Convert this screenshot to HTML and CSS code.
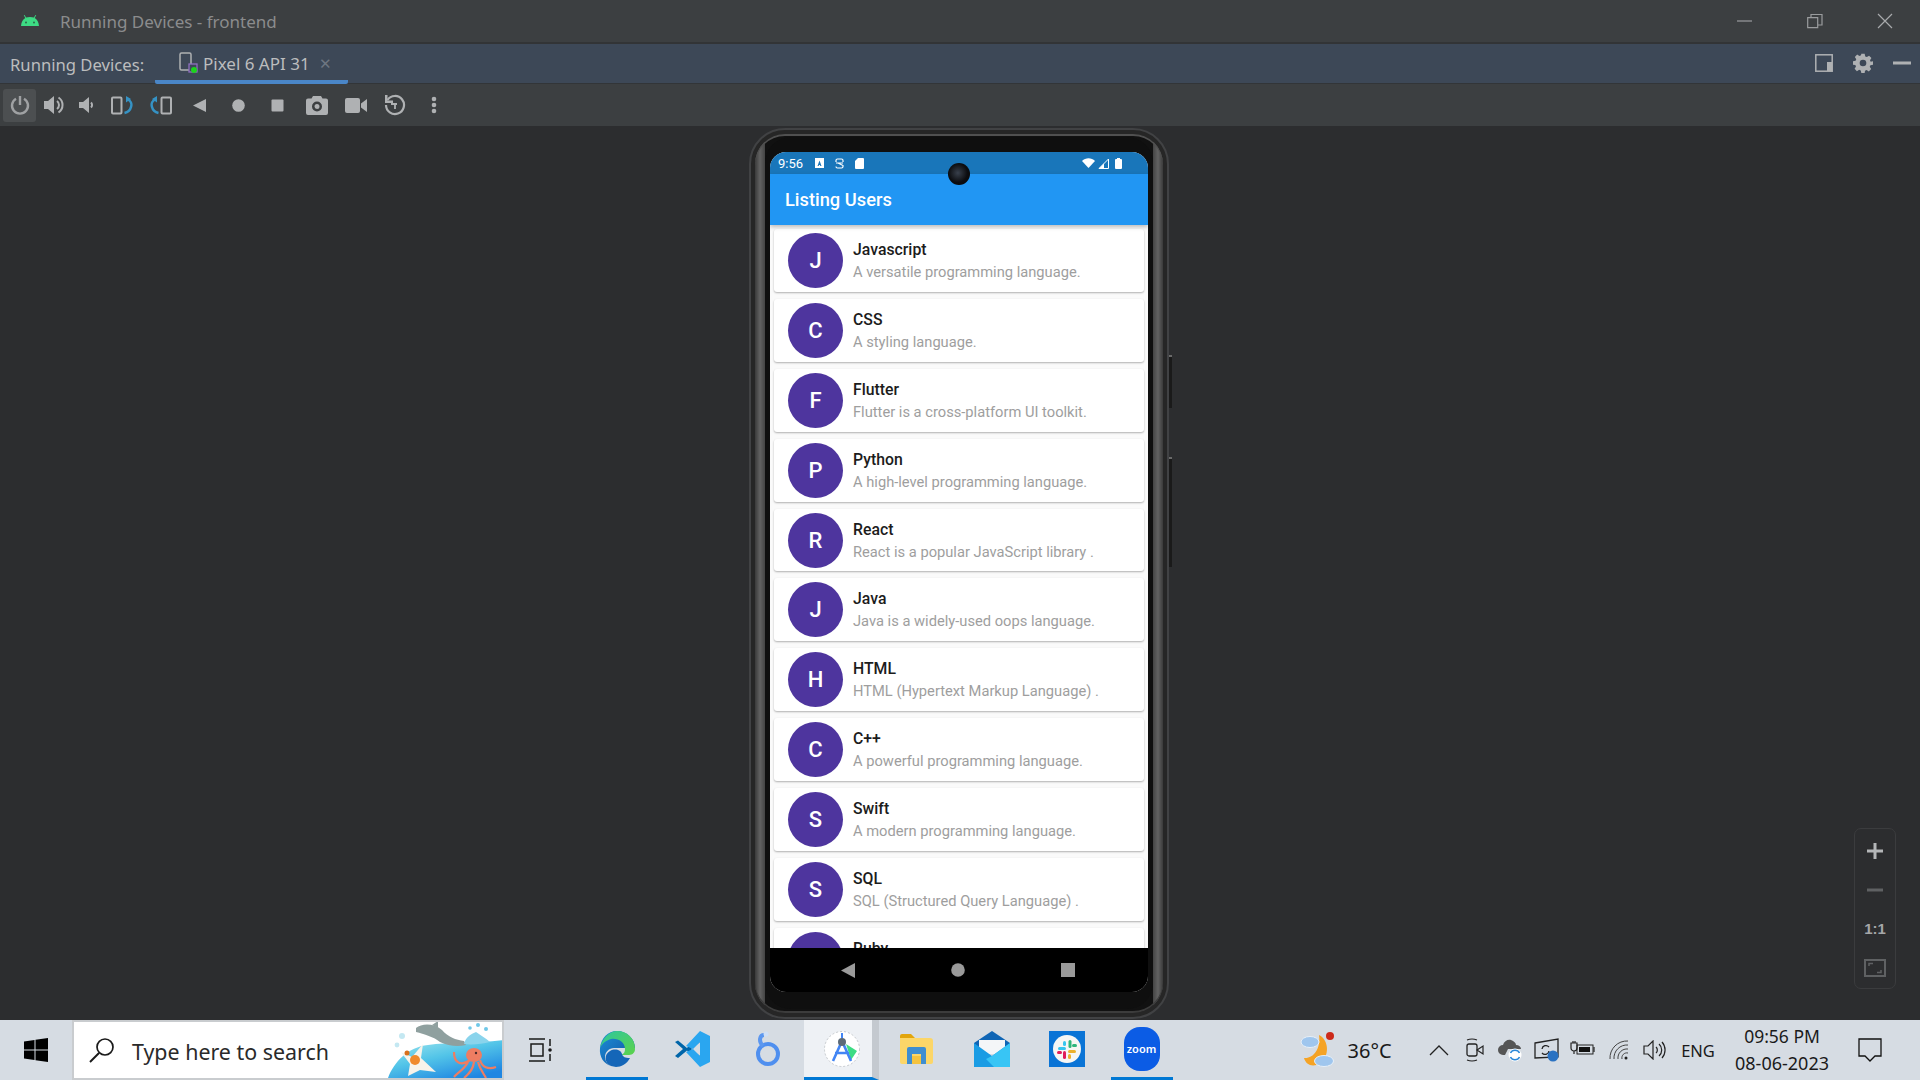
FILE: index.html
```html
<!DOCTYPE html>
<html lang="en">
<head>
<meta charset="utf-8">
<title>Running Devices - frontend</title>
<link rel="stylesheet" href="styles.css">
</head>
<body>
<div class="app">
  <header class="titlebar">
    <svg class="logo" viewBox="0 0 18 12"><path fill="#3ddc84" d="M0 12C.3 8 2 5.300 4.300 4L2.800 1.300 3.500.9 5.100 3.600C6.200 3.100 7.600 2.900 9 2.900s2.800.2 3.900.7L14.500.9l.7.4L13.700 4C16 5.300 17.700 8 18 12Z"/><circle cx="5" cy="8.500" r=".9" fill="#2c5c43"/><circle cx="13" cy="8.500" r=".9" fill="#2c5c43"/></svg>
    <span class="title">Running Devices - frontend</span>
    <div class="winctl">
      <button class="winbtn"><svg width="16" height="16" viewBox="0 0 16 16"><path d="M0 8h15" stroke="#9a9c9e" stroke-width="1.200"/></svg></button>
      <button class="winbtn"><svg width="16" height="16" viewBox="0 0 16 16"><path d="M.7 4.700h10v10H.7zM4 4.500V1.500h11v10.500h-4" fill="none" stroke="#9a9c9e" stroke-width="1.200"/></svg></button>
      <button class="winbtn"><svg width="16" height="16" viewBox="0 0 16 16"><path d="M1 1l14 14M15 1L1 15" stroke="#a8aaac" stroke-width="1.200"/></svg></button>
    </div>
  </header>

  <nav class="tabbar">
    <span class="tablabel">Running Devices:</span>
    <div class="tab">
      <svg class="tabicon" width="20" height="22" viewBox="0 0 20 22"><rect x="1" y="1" width="11" height="17" rx="1.500" fill="none" stroke="#afb1b3" stroke-width="1.500"/><rect x="10" y="12" width="8" height="8" fill="#3c4858" stroke="#8f6fc0" stroke-width="1.300"/><circle cx="15" cy="18" r="3" fill="#1cd41c"/></svg>
      <span class="tabname">Pixel 6 API 31</span>
      <span class="tabclose">&#10005;</span>
    </div>
    <div class="tabactions">
      <svg width="18" height="18" viewBox="0 0 18 18"><rect x=".8" y=".8" width="16.400" height="16.400" fill="none" stroke="#afb1b3" stroke-width="1.500"/><rect x="12" y="8" width="5" height="9" fill="#afb1b3"/></svg>
      <svg width="20" height="20" viewBox="0 0 24 24"><path fill="#afb1b3" fill-rule="evenodd" d="M10 1h4l.7 3.100 1.900.8L19.300 3.200l2.800 2.800-1.700 2.700.8 1.900L24 10v4l-3.100.7-.8 1.900 1.700 2.700-2.800 2.800-2.700-1.700-1.900.8L14 24h-4l-.7-3.100-1.900-.8-2.700 1.700-2.800-2.800 1.700-2.700-.8-1.900L0 14v-4l3.100-.7.8-1.900L2.200 4.700 5 1.900l2.700 1.700 1.900-.8ZM12 8a4 4 0 1 0 0 8 4 4 0 0 0 0-8Z"/></svg>
      <svg width="18" height="18" viewBox="0 0 18 18"><rect y="7.500" width="18" height="3" fill="#afb1b3"/></svg>
    </div>
  </nav>

  <div class="toolbar">
    <button class="tool tool-power"><svg width="20" height="20" viewBox="0 0 20 20"><path d="M6 3.700a8 8 0 1 0 8 0" fill="none" stroke="#9fa1a3" stroke-width="2.400"/><path d="M10 1v9" stroke="#9fa1a3" stroke-width="2.400"/></svg></button>
    <button class="tool tool-vol"><svg width="20" height="20" viewBox="0 0 20 20"><path fill="#afb1b3" d="M0 6h4l6-5v18l-6-5H0Z"/><path d="M13 6a5 5 0 0 1 0 8M14.500 2.500a9 9 0 0 1 0 15" fill="none" stroke="#afb1b3" stroke-width="2"/></svg></button>
    <button class="tool tool-vol2"><svg width="16" height="16" viewBox="0 0 16 16"><path fill="#afb1b3" d="M0 5h4l6-5v16l-6-5H0Z"/><path d="M12 5.500a3.500 3.500 0 0 1 0 5" fill="none" stroke="#afb1b3" stroke-width="2"/></svg></button>
    <button class="tool"><svg width="22" height="19" viewBox="0 0 22 19"><rect x="1" y="1.500" width="9.500" height="16" rx="1" fill="none" stroke="#afb1b3" stroke-width="2"/><path d="M16 3c4 1.500 5 5 4 8-.7 3-2.500 5-6.500 6" fill="none" stroke="#3592c4" stroke-width="2.500"/><path d="M15 0v6.500L20 3Z" fill="#3592c4"/></svg></button>
    <button class="tool"><svg width="22" height="19" viewBox="0 0 22 19"><rect x="11.500" y="1.500" width="9.500" height="16" rx="1" fill="none" stroke="#afb1b3" stroke-width="2"/><path d="M6 3C2 4.500 1 8 2 11c.7 3 2.500 5 6.500 6" fill="none" stroke="#3592c4" stroke-width="2.500"/><path d="M7 0v6.500L2 3Z" fill="#3592c4"/></svg></button>
    <button class="tool"><svg width="13" height="13" viewBox="0 0 13 13"><path fill="#afb1b3" d="M13 0v13L0 6.500Z"/></svg></button>
    <button class="tool"><svg width="13" height="13" viewBox="0 0 13 13"><circle cx="6.500" cy="6.500" r="6.300" fill="#afb1b3"/></svg></button>
    <button class="tool"><svg width="13" height="13" viewBox="0 0 13 13"><rect width="12" height="12" x=".5" y=".5" rx="1" fill="#afb1b3"/></svg></button>
    <button class="tool"><svg width="22" height="20" viewBox="0 0 22 20"><path fill="#afb1b3" fill-rule="evenodd" d="M7 1h8l1.500 2.500H20a2 2 0 0 1 2 2V18a2 2 0 0 1-2 2H2a2 2 0 0 1-2-2V5.500a2 2 0 0 1 2-2h3.500ZM11 6.500a5 5 0 1 0 0 10 5 5 0 0 0 0-10Zm0 2.500a2.500 2.500 0 1 1 0 5 2.500 2.500 0 0 1 0-5Z"/></svg></button>
    <button class="tool"><svg width="22" height="15" viewBox="0 0 22 15"><rect width="15" height="15" rx="2" fill="#afb1b3"/><path fill="#afb1b3" d="M16 5.500 22 1v13l-6-4.500Z"/></svg></button>
    <button class="tool"><svg width="22" height="22" viewBox="0 0 22 22"><path d="M3.500 6A9 9 0 1 1 2 11" fill="none" stroke="#afb1b3" stroke-width="2.200"/><path fill="#afb1b3" d="M1 1h2.500v5.500H9V9H1Z"/><path d="M7 10h6M11 10v5" stroke="#afb1b3" stroke-width="1.800" fill="none"/></svg></button>
    <button class="tool"><svg width="6" height="18" viewBox="0 0 6 18"><circle cx="3" cy="3" r="2.300" fill="#afb1b3"/><circle cx="3" cy="9" r="2.300" fill="#afb1b3"/><circle cx="3" cy="15" r="2.300" fill="#afb1b3"/></svg></button>
  </div>

  <main class="stage">
    <div class="device">
      <span class="sidekey sidekey-power"></span>
      <span class="sidekey sidekey-volume"></span>
      <div class="ring ring-mid">
        <div class="ring ring-inner">
          <div class="screen">
            <div class="statusbar">
              <span class="clock">9:56</span>
              <svg class="sb-ic" width="9" height="10" viewBox="0 0 9 10"><path fill="#fff" fill-rule="evenodd" d="M0 0h9v10H0Zm4.500 2.500L2.500 8h1.200l.3-1h1l.3 1h1.200Z"/></svg>
              <svg class="sb-ic" width="9" height="11" viewBox="0 0 9 11"><path d="M1 4V2.500Q1 1 2.500 1h4Q8 1 8 2.500V4M1 5h7M3 5l5 2.500v1Q8 10 6.500 10h-4Q1 10 1 8.500" fill="none" stroke="#fff" stroke-width="1.200"/></svg>
              <svg class="sb-ic" width="9" height="11" viewBox="0 0 9 11"><path fill="#fff" d="M3 0h5a1 1 0 0 1 1 1v9a1 1 0 0 1-1 1H1a1 1 0 0 1-1-1V3Z"/></svg>
              <span class="sb-right">
                <svg width="13" height="10" viewBox="0 0 13 10"><path fill="#fff" d="M0 3C3.500-.7 9.500-.7 13 3L6.500 10Z"/></svg>
                <svg width="11" height="11" viewBox="0 0 11 11"><path fill="none" stroke="#fff" stroke-width="1" d="M10.500 1v9.500H1Z"/><path fill="#fff" d="M6 5.500v5H1Z"/></svg>
                <svg class="sb-batt" width="7" height="11" viewBox="0 0 7 11"><path fill="#fff" d="M2 0h3v1h1a1 1 0 0 1 1 1v8a1 1 0 0 1-1 1H1a1 1 0 0 1-1-1V2a1 1 0 0 1 1-1h1Z"/></svg>
              </span>
            </div>
            <div class="appbar">Listing Users</div>
            <div class="list">
              <article class="card"><div class="avatar">J</div><div class="info"><div class="name">Javascript</div><div class="desc">A versatile programming language.</div></div></article>
              <article class="card"><div class="avatar">C</div><div class="info"><div class="name">CSS</div><div class="desc">A styling language.</div></div></article>
              <article class="card"><div class="avatar">F</div><div class="info"><div class="name">Flutter</div><div class="desc">Flutter is a cross-platform UI toolkit.</div></div></article>
              <article class="card"><div class="avatar">P</div><div class="info"><div class="name">Python</div><div class="desc">A high-level programming language.</div></div></article>
              <article class="card"><div class="avatar">R</div><div class="info"><div class="name">React</div><div class="desc">React is a popular JavaScript library .</div></div></article>
              <article class="card"><div class="avatar">J</div><div class="info"><div class="name">Java</div><div class="desc">Java is a widely-used oops language.</div></div></article>
              <article class="card"><div class="avatar">H</div><div class="info"><div class="name">HTML</div><div class="desc">HTML (Hypertext Markup Language) .</div></div></article>
              <article class="card"><div class="avatar">C</div><div class="info"><div class="name">C++</div><div class="desc">A powerful programming language.</div></div></article>
              <article class="card"><div class="avatar">S</div><div class="info"><div class="name">Swift</div><div class="desc">A modern programming language.</div></div></article>
              <article class="card"><div class="avatar">S</div><div class="info"><div class="name">SQL</div><div class="desc">SQL (Structured Query Language) .</div></div></article>
              <article class="card"><div class="avatar"></div><div class="info info-partial"><div class="name">Ruby</div></div></article>
            </div>
            <div class="navbar">
              <svg width="14" height="15" viewBox="0 0 14 15"><path fill="#9a9a9a" d="M14 0v15L0 7.500Z"/></svg>
              <svg width="14" height="14" viewBox="0 0 14 14"><circle cx="7" cy="7" r="6.800" fill="#9a9a9a"/></svg>
              <svg width="14" height="14" viewBox="0 0 14 14"><rect width="14" height="14" fill="#9a9a9a"/></svg>
            </div>
          </div>
          <span class="camera"></span>
        </div>
      </div>
    </div>
    <aside class="zoompanel">
      <svg width="16" height="16" viewBox="0 0 16 16"><path d="M8 0v16M0 8h16" stroke="#b4b6b8" stroke-width="3"/></svg>
      <svg width="16" height="4" viewBox="0 0 16 4"><path d="M0 2h16" stroke="#5f6163" stroke-width="3"/></svg>
      <span class="oneone">1:1</span>
      <svg width="22" height="18" viewBox="0 0 22 18"><rect x="1" y="1" width="20" height="16" fill="none" stroke="#5f6163" stroke-width="2"/><path d="M5 7V4.500h4M17 11v2.500h-4" fill="none" stroke="#5f6163" stroke-width="1.500"/></svg>
    </aside>
  </main>

  <footer class="taskbar">
    <button class="start"><svg width="24" height="24" viewBox="0 0 24 24"><path fill="#000" d="M0 3.500 10.500 2v9.500H0ZM11.500 1.800 24 0v11.500H11.500ZM0 12.500h10.500V22L0 20.500ZM11.500 12.500H24V24l-12.500-1.800Z"/></svg></button>
    <div class="search">
      <svg class="search-ic" width="26" height="26" viewBox="0 0 26 26"><circle cx="16" cy="10" r="8" fill="none" stroke="#1a1a1a" stroke-width="1.700"/><path d="M10 16 1 25" stroke="#1a1a1a" stroke-width="1.900"/></svg>
      <span class="search-text">Type here to search</span>
      <svg class="search-art" width="116" height="58" viewBox="0 0 116 58">
        <defs><linearGradient id="sea" x1="0" y1="0" x2=".7" y2="1"><stop offset="0" stop-color="#a4e8ee"/><stop offset=".5" stop-color="#52c4e8"/><stop offset="1" stop-color="#1f86e2"/></linearGradient></defs>
        <path fill="url(#sea)" d="M0 58C6 42 20 27 40 25 60 22 90 24 116 20V58Z"/>
        <path fill="#8fa09f" d="M28 8C34 3 46 3 54 10 60 17 68 20 76 21L78 25C70 27 60 26 52 22 46 17 36 14 28 12Z"/>
        <path fill="#8fa09f" d="M44 5 50 1 50 8Z"/>
        <path fill="#8ad4ec" d="M76 24C78 16 84 14 88 12 92 15 98 18 102 22 94 24 84 25 76 24Z"/>
        <circle cx="82" cy="8" r="1.800" fill="#70c8e8"/><circle cx="90" cy="5" r="2" fill="#70c8e8"/><circle cx="98" cy="9" r="2" fill="#70c8e8"/>
        <circle cx="14" cy="16" r="3" fill="#c4e8f2"/><circle cx="9" cy="25" r="2.400" fill="#c4e8f2"/>
        <path fill="#f7f3ea" d="M13 32 24 37 35 24 33 38 48 52 32 50 20 56 22 44Z"/>
        <circle cx="27" cy="40" r="5" fill="#f08a2c"/><circle cx="19" cy="33" r="2.500" fill="#d8701c"/>
        <ellipse cx="86" cy="35" rx="8" ry="7" fill="#ee7d62"/><circle cx="88" cy="33" r="1.200" fill="#4a2a2a"/>
        <path d="M66 32C66 44 74 46 82 40M80 42C76 50 70 52 66 57M86 42C85 50 81 54 76 58M92 40C94 47 100 50 108 47M90 42C92 50 96 54 98 58" fill="none" stroke="#ee7d62" stroke-width="2.200"/>
      </svg>
    </div>
    <button class="taskview"><svg width="24" height="24" viewBox="0 0 24 24"><path d="M0 1h16M0 23h16M2 6h12v12H2zM21 1v7M21 16v7" fill="none" stroke="#1a1a1a" stroke-width="1.500"/><circle cx="21" cy="12" r="1.800" fill="#1a1a1a"/></svg></button>
    <div class="apps">
      <div class="app-slot app-open"><svg width="36" height="36" viewBox="0 0 36 36"><defs><linearGradient id="eg" x1="0" y1="0" x2="1" y2="1"><stop offset="0" stop-color="#2ec6a0"/><stop offset="1" stop-color="#5cd34a"/></linearGradient><linearGradient id="eb" x1="0" y1="0" x2="1" y2="1"><stop offset="0" stop-color="#1d8fd8"/><stop offset="1" stop-color="#0f4f9e"/></linearGradient></defs><path fill="url(#eb)" d="M1 17C2 7 9 0 18 0c10 0 18 8 18 17H15c-5 0-9 4-9 9 0 3 2 7 6 9C5 33 0 26 1 17Z"/><path fill="url(#eg)" d="M1 17C3 7 11 0 18 0c10 0 18 7 18 18 0 5-4 6-7 6h-7c3-1 4-3 4-6 0-7-7-11-14-10C8 9 3 12 1 17Z"/><path fill="#1466b8" d="M12 35c-7-3-7-12-1-15 5-3 11-1 12 3 1 3 3 4 8 4-3 6-9 9-14 9Z"/></svg></div>
      <div class="app-slot"><svg width="36" height="36" viewBox="0 0 36 36"><path fill="#0065a9" d="M1 11 4 9.500l9 7.500L26 1v10L17 18l9 7v10L13 19.500 4 27 1 25l8-7Z"/><path fill="#2aa6f0" d="M26 0 36 5v26L26 36 12 21 19 18 26 25V11L19 18 12 15Z"/></svg></div>
      <div class="app-slot"><svg width="26" height="36" viewBox="0 0 26 36"><circle cx="14" cy="23" r="10" fill="none" stroke="#4f8fef" stroke-width="4"/><path d="M9 15C4 10 6 4 10 4" fill="none" stroke="#5c97ef" stroke-width="4"/><circle cx="12" cy="3" r="2.500" fill="#cfe0f7"/></svg></div>
      <div class="app-slot app-active"><svg width="36" height="36" viewBox="0 0 36 36"><circle cx="18" cy="18" r="17.500" fill="#fff" stroke="#c4c8cc" stroke-dasharray="2 2"/><path fill="#3ddc84" d="M22 13l11 7-6 9Z"/><path d="M9 30 18 10l9 20M11 22h14" fill="none" stroke="#4285f4" stroke-width="2.600"/><circle cx="18" cy="11" r="4" fill="#5c6a78"/><path d="M18 2v5" stroke="#4285f4" stroke-width="2"/></svg></div>
      <div class="app-slot"><svg width="33" height="30" viewBox="0 0 33 30"><path fill="#e2a50c" d="M0 2a2 2 0 0 1 2-2h9l4 4h14v6H0Z"/><path fill="#fcd668" d="M0 4h30a3 3 0 0 1 3 3v21a2 2 0 0 1-2 2H2a2 2 0 0 1-2-2Z"/><path fill="#3f8ed0" d="M7 30V15a2 2 0 0 1 2-2h15a2 2 0 0 1 2 2v15h-5V20h-9v10Z"/><rect x="12" y="22" width="9" height="8" fill="#f5c33f"/></svg></div>
      <div class="app-slot"><svg width="36" height="36" viewBox="0 0 36 36"><path fill="#0f65b5" d="M0 12 18 0l18 12v4H0Z"/><path fill="#f4f6f8" d="M5 9h26v14H5Z"/><path fill="#1a9ce4" d="M0 12l18 13 18-13v24H0Z"/><path fill="#38c5f5" d="M36 12v24H20l-8-8 6-3Z"/></svg></div>
      <div class="app-slot"><svg width="36" height="36" viewBox="0 0 36 36"><rect width="36" height="36" fill="#0a74d6"/><ellipse cx="18" cy="18" rx="14" ry="14" fill="#f6f7f5"/><rect x="19.500" y="9" width="3" height="8" rx="1.500" fill="#2eb67d"/><rect x="23" y="13" width="5" height="3" rx="1.500" fill="#2eb67d"/><rect x="9" y="16" width="8" height="3" rx="1.500" fill="#36c5f0"/><rect x="14" y="10" width="3" height="5" rx="1.500" fill="#36c5f0"/><rect x="14" y="20" width="3" height="8" rx="1.500" fill="#e01e5a"/><rect x="8" y="20" width="5" height="3" rx="1.500" fill="#e01e5a"/><rect x="19" y="19" width="8" height="3" rx="1.500" fill="#ecb22e"/><rect x="19" y="23" width="3" height="5" rx="1.500" fill="#ecb22e"/></svg></div>
      <div class="app-slot app-open"><span class="zoomlogo">zoom</span></div>
    </div>
    <div class="tray">
      <div class="t-slot t-weather"><svg width="38" height="38" viewBox="0 0 38 38"><path fill="#f5a325" d="M20 4C30 9 31 25 21 32 14 37 7 34 5 27 14 28 22 18 20 4Z"/><ellipse cx="11" cy="11" rx="9" ry="5.500" fill="#9fc6ee" stroke="#e8f0f8"/><ellipse cx="25" cy="30" rx="9.500" ry="5.500" fill="#9fc6ee" stroke="#e8f0f8"/><circle cx="31" cy="5" r="4" fill="#cc2a1a"/></svg></div>
      <div class="t-temp">36°C</div>
      <div class="t-slot t-chevron"><svg width="20" height="11" viewBox="0 0 20 11"><path d="M1 10 10 1l9 9" fill="none" stroke="#222" stroke-width="1.300"/></svg></div>
      <div class="t-slot"><svg width="18" height="24" viewBox="0 0 18 24"><rect x="1" y="6" width="10" height="12" rx="2" fill="none" stroke="#222" stroke-width="1.300"/><path d="M11 12l6-4v8ZM1 2q5-2 10 0M1 22q5 2 10 0" fill="none" stroke="#222" stroke-width="1.200"/></svg></div>
      <div class="t-slot"><svg width="25" height="24" viewBox="0 0 25 24"><path fill="#555" d="M5 17a5 5 0 0 1 0-10C6 3 10 1 13 2c3 1 5 3 5 5 3 0 5 2 5 4H10l-3 6Z"/><circle cx="17" cy="17" r="6.500" fill="#fff"/><path d="M12.500 15a5 5 0 0 1 9 0M21.500 19a5 5 0 0 1-9 0" fill="none" stroke="#2a88d8" stroke-width="1.500"/></svg></div>
      <div class="t-slot"><svg width="25" height="24" viewBox="0 0 25 24"><path d="M1 5 24 1v18L1 20Z" fill="none" stroke="#222" stroke-width="1.300"/><path d="M8 11a4 4 0 0 1 7-2M15 13a4 4 0 0 1-7 2" fill="none" stroke="#222" stroke-width="1.300"/><circle cx="19" cy="18" r="5.500" fill="#2a72c2"/></svg></div>
      <div class="t-slot"><svg width="25" height="18" viewBox="0 0 25 18"><rect x="7" y="4" width="16" height="9" fill="none" stroke="#222"/><rect x="9" y="6" width="11" height="5" fill="#111"/><path d="M24 6v5M1 2h6v5a3 3 0 0 1-6 0ZM3 2V0M5 2V0M4 10v3" stroke="#222" fill="none" stroke-width="1.200"/></svg></div>
      <div class="t-slot"><svg width="20" height="20" viewBox="0 0 20 20"><path d="M1 19A17 17 0 0 1 19 1M5 19A13 13 0 0 1 19 5M9 19A9 9 0 0 1 19 9M13 19A5 5 0 0 1 19 13" fill="none" stroke="#444" stroke-width="1"/><circle cx="17" cy="18" r="1.500" fill="#222"/></svg></div>
      <div class="t-slot"><svg width="23" height="20" viewBox="0 0 23 20"><path d="M1 6h4l5-5v18l-5-5H1Z" fill="none" stroke="#222" stroke-width="1.200"/><path d="M13 7a4 4 0 0 1 0 6M16 4a8 8 0 0 1 0 12M19 2a12 12 0 0 1 0 16" fill="none" stroke="#222" stroke-width="1.200"/></svg></div>
      <div class="t-lang">ENG</div>
      <div class="t-clock"><span>09:56 PM</span><span class="t-date">08-06-2023</span></div>
      <div class="t-slot t-notify"><svg width="24" height="24" viewBox="0 0 24 24"><path d="M1 1h22v17h-6l-5 5-5-5H1Z" fill="none" stroke="#111" stroke-width="1.300"/></svg></div>
    </div>
  </footer>
</div>
</body>
</html>
```

FILE: styles.css
```css
* { box-sizing: border-box; }
html, body { margin: 0; padding: 0; height: 100%; overflow: hidden; }
body { font-family: "Noto Sans", "Open Sans", sans-serif; background: #2c2d2f; }
button { border: 0; background: none; padding: 0; margin: 0; display: flex; align-items: center; justify-content: center; }
.app { width: 1920px; height: 1080px; display: flex; flex-direction: column; }

.titlebar { height: 44px; background: #3c3f41; border-bottom: 2px solid #323436; display: flex; align-items: center; padding-left: 21px; flex: none; }
.logo { width: 18px; height: 12px; margin-bottom: 2px; }
.title { margin-left: 21px; color: #8b8c8d; font-size: 17px; }
.winctl { margin-left: auto; display: flex; }
.winbtn { width: 70px; height: 42px; }

.tabbar { height: 40px; background: #3d4857; border-bottom: 1px solid #323538; display: flex; align-items: center; padding-left: 10px; flex: none; }
.tablabel { color: #bcbdbe; font-size: 16.650px; width: 145px; margin-top: 2px; }
.tab { height: 40px; width: 193px; border-bottom: 4px solid #4a86c7; display: flex; align-items: center; padding: 3px 0 0 24px; border-radius: 0 0 2px 2px; }
.tabname { color: #bcbdbe; font-size: 17px; margin-left: 4px; width: 116px; white-space: nowrap; }
.tabclose { color: #6e7681; font-size: 15px; }
.tabactions { margin-left: auto; display: flex; align-items: center; gap: 20px; padding: 0 9px 2px 0; }

.toolbar { height: 42px; background: #3c3f41; display: flex; align-items: center; padding-left: 3px; flex: none; }
.tool { width: 39px; height: 33px; }
.tool-power { width: 33px; background: #4c4f51; border-radius: 3px; }
.tool-vol { width: 36px; }
.tool-vol2 { width: 30px; }

.stage { flex: 1; position: relative; background: #2c2d2f; display: flex; justify-content: center; padding: 2px 2px 1px 0; min-height: 0; }
.device { width: 420px; height: 891px; position: relative; background: #262626; border: 2px solid #414244; border-radius: 36px; padding: 4px; }
.sidekey { position: absolute; right: -5px; width: 3px; background: #1a1a1a; border-top: 2px solid #6a6a6a; }
.sidekey-power { top: 225px; height: 53px; }
.sidekey-volume { top: 327px; height: 110px; }
.ring { border-radius: 30px; }
.ring-mid { height: 100%; padding: 3px 10px 4px; background: linear-gradient(90deg, #3a3a3a 0, #626262 5px, #444 10px, #111 10px, #111 calc(100% - 10px), #444 calc(100% - 10px), #626262 calc(100% - 5px), #3a3a3a 100%); box-shadow: inset 0 2px 0 #505050, inset 0 -2px 0 #3c3c3c; }
.ring-inner { height: 100%; background: #0f0f0f; padding: 15px 5px 17px; position: relative; border-radius: 26px; }
.camera { position: absolute; left: 50%; top: 26px; width: 22px; height: 22px; margin-left: -11px; border-radius: 50%; background: radial-gradient(circle at 45% 45%, #38404c 0, #0c0d10 55%, #050505 100%); }

.screen { height: 840px; border-radius: 16px; overflow: hidden; display: flex; flex-direction: column; background: #fafafa; font-family: Roboto, sans-serif; }
.statusbar { height: 22px; background: #1976ba; display: flex; align-items: center; padding: 0 0 0 8px; color: #fff; font-size: 13px; flex: none; }
.clock { width: 37px; }
.sb-ic { margin-right: 11px; }
.sb-right { margin-left: auto; display: flex; align-items: center; gap: 3px; padding-right: 26px; }
.sb-batt { margin-left: 3px; }
.appbar { height: 51px; background: #2196f3; color: #fff; font-weight: 500; font-size: 18.300px; line-height: 52px; padding-left: 15px; flex: none; box-shadow: 0 2px 4px rgba(0,0,0,.25); position: relative; }
.list { flex: 1; min-height: 0; overflow: hidden; padding: 4px 4px 0; display: flex; flex-direction: column; gap: 7px; }
.card { height: 62.900px; flex: none; background: #fff; border-radius: 3px; box-shadow: 0 1px 2px rgba(0,0,0,.3); display: flex; align-items: center; padding-left: 14px; }
.avatar { width: 55px; height: 55px; border-radius: 50%; background: #4e359e; color: #fff; font-weight: 500; font-size: 22px; display: flex; align-items: center; justify-content: center; flex: none; }
.info { margin-left: 10px; display: flex; flex-direction: column; padding-top: 1px; white-space: nowrap; }
.info-partial { padding-bottom: 21px; }
.name { font-weight: 500; font-size: 15.800px; line-height: 22px; color: #1c1c1c; }
.desc { font-size: 14.700px; line-height: 22px; color: #9e9e9e; }
.navbar { height: 44px; background: #000; display: flex; align-items: center; flex: none; padding-left: 71px; gap: 96px; }

.zoompanel { position: absolute; right: 24px; top: 702px; width: 42px; height: 161px; border: 1px solid #3b3c3e; border-radius: 7px; display: flex; flex-direction: column; align-items: center; padding-top: 14px; background: #2c2d2f; }
.zoompanel svg:nth-child(2) { margin-top: 29px; }
.oneone { color: #a4a6a8; font: 700 15px "Liberation Sans", sans-serif; margin-top: 28px; }
.zoompanel svg:nth-child(4) { margin-top: 22px; }

.taskbar { height: 60px; background: #d6dce3; display: flex; flex: none; color: #1a1a1a; }
.start { width: 72px; height: 60px; }
.search { width: 432px; height: 60px; background: #fff; border: 2px solid #c9cccf; display: flex; align-items: center; position: relative; overflow: hidden; padding-left: 15px; }
.search-text { margin-left: 17px; font-size: 21.400px; color: #2a2a2a; margin-top: 2px; }
.search-art { position: absolute; right: -2px; bottom: 0; }
.taskview { width: 75px; height: 60px; padding-right: 2px; }
.apps { display: flex; height: 60px; }
.app-slot { width: 75px; height: 60px; display: flex; align-items: center; justify-content: center; position: relative; padding-bottom: 3px; }
.app-open::after { content: ""; position: absolute; left: 7px; right: 6px; bottom: 0; height: 3px; background: #0078d4; }
.app-active { background: #eef1f5; border-bottom: 3px solid #0078d4; border-right: 7px solid #c4c9cf; padding: 0 0 0 7px; }
.zoomlogo { width: 36px; height: 44px; border-radius: 16px; background: #0b5ce5; color: #fff; font-size: 11px; display: flex; align-items: center; justify-content: center; font-weight: 600; }
.tray { margin-left: auto; display: flex; align-items: center; height: 60px; padding-right: 19px; }
.t-slot { width: 36px; height: 60px; display: flex; align-items: center; justify-content: center; }
.t-weather { width: 42px; margin-right: 1px; }
.t-temp { width: 81px; font-size: 20px; padding-left: 8px; white-space: nowrap; }
.t-lang { width: 53.500px; padding-right: 2.500px; text-align: center; font-size: 16.500px; }
.t-clock { width: 112px; display: flex; flex-direction: column; align-items: center; font-size: 17.500px; line-height: 27.500px; white-space: nowrap; }
.t-date { font-size: 18px; }
.t-notify { width: 63px; }
```
